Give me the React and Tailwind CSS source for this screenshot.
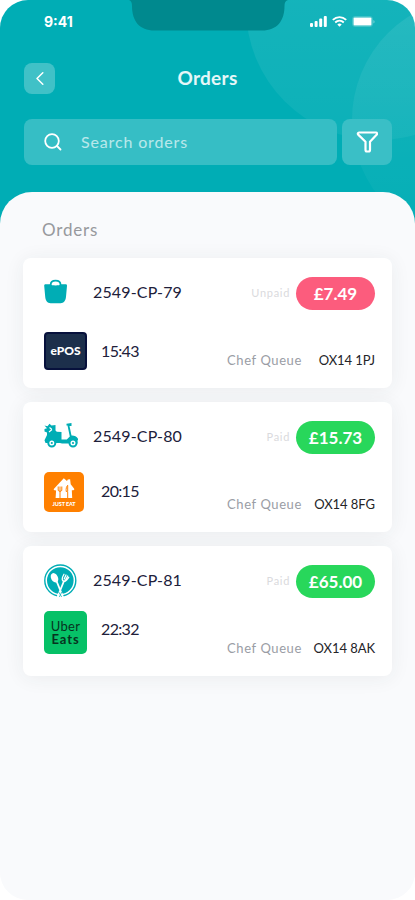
const BagIcon = () => (
  <svg width="24" height="25" viewBox="0 0 24 25" fill="none">
    <path d="M6.700 8V5.800C6.700 3.200 8.600 1.600 11.600 1.600s4.900 1.600 4.900 4.200V8" stroke="#00adb5" strokeWidth="1.800" />
    <path d="M1.600 5.200h4.600c1 .8 2.400 1.200 5.400 1.200s4.400-.4 5.400-1.200h4.600c1 0 1.500.7 1.400 1.600L22 17.800c-.4 4-2.200 6.400-5.400 6.400H6.600c-3.200 0-5-2.400-5.400-6.400L.2 6.800C.1 5.900.6 5.200 1.600 5.200Z" fill="#00adb5" />
  </svg>
);

const ScooterIcon = () => (
  <svg width="34" height="25" viewBox="0 0 34 25" fill="none">
    <path d="M.5 2.500 3.500 3.300 5.500.8l2 1.700 4-.5v5.500l1.300 1.300 4.700.2v7.500h5.300l3-3-2.300-11h-1V.8l5-.8v3h-2l2 9.500c3.200-.2 5.600 1.300 7 4l-1 1v3H18L16 20H1.500L.5 17.300 3 12V9.500L.5 8.500V6l2.500-.8Z" fill="#00adb5" />
    <circle cx="7.800" cy="20" r="3.500" fill="#fff" stroke="#00adb5" strokeWidth="2" />
    <circle cx="29" cy="20" r="3.500" fill="#fff" stroke="#00adb5" strokeWidth="2" />
    <circle cx="7.800" cy="20" r="1.100" fill="#00adb5" />
    <circle cx="29" cy="20" r="1.100" fill="#00adb5" />
    <path d="m5.500 4.500 2.200 1.700M5 9l3-2.500" stroke="#fff" strokeWidth="1.100" />
  </svg>
);

const PlateIcon = () => (
  <svg width="33" height="34" viewBox="0 0 33 34" fill="none">
    <circle cx="16.300" cy="16.500" r="15.500" stroke="#00adb5" strokeWidth="1.400" />
    <circle cx="16.300" cy="16.500" r="13.300" fill="#00adb5" />
    <path d="m12.500 17 6.500 16M20 17l-6.500 16" stroke="#fff" strokeWidth="1.800" strokeLinecap="round" />
    <ellipse cx="10.500" cy="13.800" rx="3.400" ry="5" transform="rotate(-28 10.500 13.800)" fill="#fff" />
    <path d="M20 10.300c-2 3.500-2.200 5.700-1 6.700 1.600 1.100 3.500-.2 5.700-3.700M22 11l-1.800 4M23.700 12l-2.200 4" stroke="#fff" strokeWidth="1.300" strokeLinecap="round" />
    <path d="m14 29-1 5h6.500L18 28.500Z" fill="#fff" />
    <path d="m15.300 33 2.500-5M14.700 28l3 5" stroke="#00adb5" strokeWidth=".7" />
  </svg>
);

const EposLogo = () => (
  <div className="flex h-[38px] w-[43px] items-center justify-center rounded border-2 border-[#07113c] bg-[#1c2f4b] font-['Lato'] text-[12px] font-black text-white">
    ePOS
  </div>
);

const JustEatLogo = () => (
  <div className="flex h-10 w-10 flex-col items-center rounded-[5px] bg-[#ff8000] pt-1.5">
    <svg width="22" height="21" viewBox="0 0 22 21">
      <path d="M10.800.3 14 3l.8-1.500 2.300-.3.600 5 3.300 4.300c.8 1.200.3 1.700-2.200 1.800l.4 7.700H2.600l.5-7.600C.8 12.300.3 11.700 1 10.700Z" fill="#fff" />
      <path d="M5.200 8.500v3.700c0 1.500 3.600 1.500 3.600 0V8.500M7 8.500V20M14.700 20v-6.500h-1.500c-.3-3 .2-5 1.500-6.200V13" stroke="#ff8000" strokeWidth="1" fill="none" />
    </svg>
    <span className="mt-[2px] font-['Lato'] text-[5.5px] leading-[6px] font-black tracking-[-0.1px] text-white">JUST EAT</span>
  </div>
);

const UberEatsLogo = () => (
  <div className="flex h-[43px] w-[43px] flex-col items-center justify-center rounded-[5px] bg-[#06c167] font-['Lato'] text-[13px] leading-[13px] text-[#06331f]">
    <span className="h-[13px] tracking-[0.3px]">Uber</span>
    <span className="h-[13px] font-bold tracking-[0.9px]">Eats</span>
  </div>
);

const orders = [
  {
    id: "2549-CP-79",
    time: "15:43",
    status: "Unpaid",
    price: "£7.49",
    postcode: "OX14 1PJ",
    icon: <BagIcon />,
    logo: <EposLogo />,
    iconClass: "pt-[21px]",
    logoClass: "h-[37px] mt-[74px]",
    timeClass: "ml-3.5",
    pill: "bg-[#fc5c7d]",
  },
  {
    id: "2549-CP-80",
    time: "20:15",
    status: "Paid",
    price: "£15.73",
    postcode: "OX14 8FG",
    icon: <ScooterIcon />,
    logo: <JustEatLogo />,
    iconClass: "pt-[21px]",
    logoClass: "h-[38px] mt-[70px]",
    timeClass: "ml-[17px]",
    pill: "bg-[#28d75b]",
  },
  {
    id: "2549-CP-81",
    time: "22:32",
    status: "Paid",
    price: "£65.00",
    postcode: "OX14 8AK",
    icon: <PlateIcon />,
    logo: <UberEatsLogo />,
    iconClass: "pt-[18px]",
    logoClass: "h-[35px] mt-[65px]",
    timeClass: "ml-3.5",
    pill: "bg-[#28d75b]",
  },
];

const OrderCard = ({ order }) => (
  <div className="flex h-[130px] justify-between rounded-lg bg-white pr-[17px] pl-[21px] shadow-[0_2px_20px_rgba(40,50,60,0.07)]">
    <div className="grid text-[16px] text-[#20203a]">
      <div className="col-start-1 row-start-1 flex items-start">
        <div className={`w-[49px] ${order.iconClass}`}>{order.icon}</div>
        <span className="pt-[22px] leading-6 tracking-[0.15px]">{order.id}</span>
      </div>
      <div className={`col-start-1 row-start-1 flex items-center ${order.logoClass}`}>
        <div className="self-start">{order.logo}</div>
        <span className={`leading-6 tracking-[-0.65px] ${order.timeClass}`}>{order.time}</span>
      </div>
    </div>
    <div className="flex flex-col items-end justify-between pt-[19px] pb-[18px]">
      <div className="flex items-center gap-1.5">
        <span className="text-[11px] tracking-[0.7px] text-[#dadadd]">{order.status}</span>
        <div className={`flex h-[33px] w-[79px] items-center justify-center rounded-full text-[17px] font-bold text-white ${order.pill}`}>
          {order.price}
        </div>
      </div>
      <div className="flex w-[148px] justify-between text-[13px] leading-5">
        <span className="tracking-[0.6px] text-[#9a9da5]">Chef Queue</span>
        <span className="tracking-[-0.05px] text-[#242428]">{order.postcode}</span>
      </div>
    </div>
  </div>
);

const StatusBar = () => (
  <div className="flex h-[43px] items-center justify-between pr-10 pl-[44px] text-white">
    <span className="font-['Inter'] text-[14px] font-bold">9:41</span>
    <div className="flex items-center gap-[5px]">
      <svg width="17" height="11" viewBox="0 0 17 11" fill="#fff">
        <rect y="7" width="3" height="4" rx="1" />
        <rect x="4.600" y="5" width="3" height="6" rx="1" />
        <rect x="9.200" y="2.500" width="3" height="8.500" rx="1" />
        <rect x="13.800" width="3" height="11" rx="1" />
      </svg>
      <svg width="15" height="11" viewBox="0 0 15 11" fill="none" stroke="#fff" strokeWidth="1.900">
        <path d="M.8 3.900c3.900-3.700 9.500-3.700 13.400 0M3.200 6.500c2.500-2.300 6.100-2.300 8.600 0" />
        <path d="m5.300 8.500c1.300-1.200 3.100-1.200 4.400 0l-2.200 2.300Z" fill="#fff" stroke="none" />
      </svg>
      <svg width="23" height="11" viewBox="0 0 23 11">
        <rect x=".5" y=".5" width="20" height="10" rx="2.500" fill="none" stroke="#fff" strokeOpacity=".2" />
        <rect x="1.500" y="1.500" width="18" height="8" rx="1" fill="#fff" />
        <path d="M21.500 4v3.500c1.300-.7 1.300-2.800 0-3.500Z" fill="#fff" fillOpacity=".5" />
      </svg>
    </div>
  </div>
);

const App = () => {
  return (
    <div className="h-[900px] w-[415px] bg-white font-['Lato',sans-serif]">
      <div className="relative isolate flex h-full flex-col overflow-hidden rounded-[28px] bg-[linear-gradient(#00adb5_300px,#f9fafc_300px)]">
        <svg className="absolute top-0 left-0 -z-10" width="415" height="230">
          <defs>
            <linearGradient id="bubble" gradientUnits="userSpaceOnUse" x1="0" y1="0" x2="0" y2="230">
              <stop offset="0" stopColor="#fff" stopOpacity=".08" />
              <stop offset=".4" stopColor="#fff" stopOpacity=".06" />
              <stop offset="1" stopColor="#fff" stopOpacity=".02" />
            </linearGradient>
          </defs>
          <circle cx="378" cy="8" r="132" fill="url(#bubble)" />
          <circle cx="475" cy="120" r="123" fill="url(#bubble)" />
          <path d="M129 0h159c-2.500 1-3.500 2.500-3.500 6 0 15-7.500 24.500-22.500 24.500H154.500c-15 0-22.500-9.500-22.500-24.500 0-3.500-1-5-3-6Z" fill="#00898e" />
        </svg>

        <StatusBar />

        <header className="grid grid-cols-[1fr_auto_1fr] items-center px-6 pt-5">
          <button className="flex h-[31px] w-[31px] items-center justify-center rounded-lg bg-white/25">
            <svg width="8" height="13" viewBox="0 0 8 13" fill="none" stroke="#fff" strokeWidth="1.500" strokeLinecap="round" strokeLinejoin="round">
              <path d="M6.800.8 1 6.500l5.800 5.700" />
            </svg>
          </button>
          <h1 className="text-[19px] font-bold tracking-[0.3px] text-white/90">Orders</h1>
        </header>

        <div className="flex gap-[5px] pt-[25px] pr-[23px] pl-6">
          <div className="flex h-[46px] flex-1 items-center rounded-lg bg-[#36bec5] pl-5">
            <svg width="18" height="18" viewBox="0 0 18 18" fill="none" stroke="#fff" strokeWidth="1.800" strokeLinecap="round">
              <circle cx="8" cy="8" r="6.800" />
              <path d="m13 13 3.500 3.500" />
            </svg>
            <span className="ml-[19px] text-[16px] tracking-[0.85px] text-white/65">Search orders</span>
          </div>
          <button className="flex h-[46px] w-[50px] items-center justify-center rounded-lg bg-[#3abfc6]">
            <svg width="22" height="22" viewBox="0 0 22 22" fill="none" stroke="#fff" strokeWidth="2.200" strokeLinejoin="round">
              <path d="M3 1.500h17c1.100 0 1.400 1.300.8 2.100L14 10.800v7.900c0 1-.6 1.800-1.500 1.800h-1.500c-.9 0-1.500-.8-1.500-1.800v-7.900L2.200 3.600C1.500 2.800 1.800 1.500 3 1.500Z" />
            </svg>
          </button>
        </div>

        <main className="mt-[27px] flex-1 rounded-t-[32px] bg-[#f9fafc] px-[23px] pt-[26px]">
          <h2 className="mb-4 pl-[19px] text-[17px] leading-6 tracking-[0.8px] text-[#97999d]">Orders</h2>
          <div className="flex flex-col gap-3.5">
            {orders.map((order) => (
              <OrderCard key={order.id} order={order} />
            ))}
          </div>
        </main>
      </div>
    </div>
  );
};

export default App;
